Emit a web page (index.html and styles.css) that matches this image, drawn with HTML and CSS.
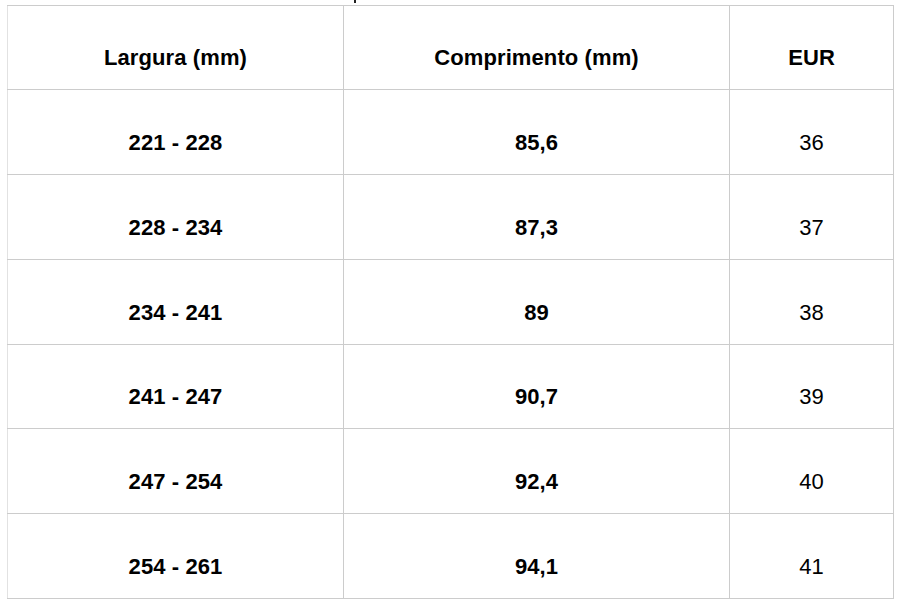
FILE: index.html
```html
<!DOCTYPE html>
<html lang="pt">
<head>
<meta charset="utf-8">
<title>Tabela de tamanhos</title>
<link rel="stylesheet" href="styles.css">
</head>
<body>
<div class="caption-cut"><span class="tick"></span></div>
<table class="sizes">
  <colgroup>
    <col class="c1">
    <col class="c2">
    <col class="c3">
  </colgroup>
  <thead>
    <tr><th>Largura (mm)</th><th>Comprimento (mm)</th><th>EUR</th></tr>
  </thead>
  <tbody>
    <tr><td class="b">221 - 228</td><td class="b">85,6</td><td>36</td></tr>
    <tr><td class="b">228 - 234</td><td class="b">87,3</td><td>37</td></tr>
    <tr><td class="b">234 - 241</td><td class="b">89</td><td>38</td></tr>
    <tr><td class="b">241 - 247</td><td class="b">90,7</td><td>39</td></tr>
    <tr><td class="b">247 - 254</td><td class="b">92,4</td><td>40</td></tr>
    <tr><td class="b">254 - 261</td><td class="b">94,1</td><td>41</td></tr>
  </tbody>
</table>
</body>
</html>
```
FILE: styles.css
```css
html, body {
  margin: 0;
  padding: 0;
  background: #fff;
}
body {
  font-family: "Liberation Sans", Arial, sans-serif;
  color: #000;
}
.caption-cut {
  height: 5px;
  line-height: 0;
}
.tick {
  display: inline-block;
  width: 2px;
  height: 3px;
  margin-left: 354px;
  background: #222;
  vertical-align: top;
}
.sizes {
  margin-left: 7px;
  width: 886px;
  border-collapse: collapse;
  table-layout: fixed;
}
.c1 { width: 336px; }
.c2 { width: 386px; }
.c3 { width: 164px; }
.sizes th,
.sizes td {
  border: 1px solid #cccccc;
  height: 84.85px;
  box-sizing: border-box;
  padding: 0 4px 19px;
  vertical-align: bottom;
  text-align: center;
  font-size: 22px;
  line-height: 24px;
  letter-spacing: 0.1px;
  font-weight: normal;
}
.sizes thead th {
  height: 84px;
}
.sizes th,
.sizes td.b {
  font-weight: bold;
}
.sizes tr > :first-child {
  border-left-color: #e2e2e2;
}
```
